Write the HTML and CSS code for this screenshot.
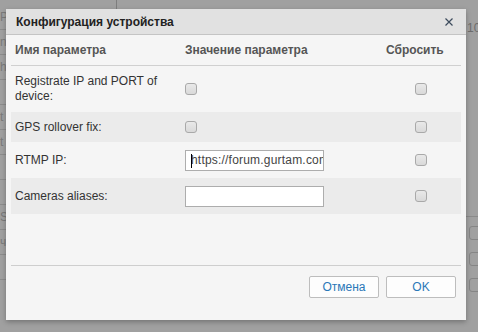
FILE: index.html
```html
<!DOCTYPE html>
<html>
<head>
<meta charset="utf-8">
<link rel="stylesheet" href="styles.css">
</head>
<body>
<div class="page">
  <div class="bg-left">
    <div class="bg-cell">P</div>
    <div class="bg-cell">n</div>
    <div class="bg-cell">h</div>
    <div class="bg-cell"></div>
    <div class="bg-cell">t</div>
    <div class="bg-cell">t</div>
    <div class="bg-cell"></div>
    <div class="bg-cell"></div>
    <div class="bg-cell">S</div>
    <div class="bg-cell">ч</div>
    <div class="bg-cell"></div>
  </div>
  <div class="bg-mid">
    <div class="bg-tick"></div>
  </div>
  <div class="bg-right">
    <div class="bg-num">10</div>
    <div class="bg-fill"></div>
    <div class="bg-btn"></div>
    <div class="bg-btn"></div>
    <div class="bg-btn"></div>
  </div>
</div>

<div class="dialog">
  <div class="dlg-head">
    <span class="dlg-title">Конфигурация устройства</span>
    <svg class="dlg-close" width="8" height="8" viewBox="0 0 8 8"><path d="M0.5 0.5L7.5 7.5M7.5 0.5L0.5 7.5" stroke="#3c4b5c" stroke-width="1.2" fill="none"/></svg>
  </div>
  <div class="dlg-body">
    <div class="row row-head">
      <div class="cell">Имя параметра</div>
      <div class="cell">Значение параметра</div>
      <div class="cell">Сбросить</div>
    </div>
    <div class="row row-tall">
      <div class="cell label">Registrate IP and PORT of<br>device:</div>
      <div class="cell"><span class="cb"></span></div>
      <div class="cell"><span class="cb cb-reset"></span></div>
    </div>
    <div class="row row-short alt">
      <div class="cell label">GPS rollover fix:</div>
      <div class="cell"><span class="cb"></span></div>
      <div class="cell"><span class="cb cb-reset"></span></div>
    </div>
    <div class="row row-input">
      <div class="cell label">RTMP IP:</div>
      <div class="cell"><div class="input"><span class="caret"></span>https://forum.gurtam.com</div></div>
      <div class="cell"><span class="cb cb-reset"></span></div>
    </div>
    <div class="row row-input alt">
      <div class="cell label">Cameras aliases:</div>
      <div class="cell"><div class="input"></div></div>
      <div class="cell"><span class="cb cb-reset"></span></div>
    </div>
  </div>
  <div class="dlg-foot">
    <button class="btn">Отмена</button>
    <button class="btn">OK</button>
  </div>
</div>
</body>
</html>
```

FILE: styles.css
```css
* { box-sizing: border-box; }
html, body {
  margin: 0;
  padding: 0;
  width: 478px;
  height: 332px;
  overflow: hidden;
  background: #a0a0a0;
  font-family: "Liberation Sans", Arial, sans-serif;
}
.page {
  display: flex;
  height: 332px;
}
.bg-left {
  width: 7px;
  display: flex;
  flex-direction: column;
  padding-top: 5px;
}
.bg-cell {
  height: 25px;
  border-bottom: 1px solid #8c8c8c;
  font-size: 12px;
  color: #7a7a7a;
  line-height: 24px;
  overflow: hidden;
}
.bg-mid {
  flex: 1;
  padding-left: 109px;
}
.bg-tick {
  width: 1px;
  height: 9px;
  background: #7e7e7e;
}
.bg-right {
  width: 12px;
  display: flex;
  flex-direction: column;
  padding-top: 20px;
}
.bg-num {
  font-size: 12px;
  color: #6c6c6c;
  line-height: 16px;
  padding-left: 1px;
  white-space: nowrap;
}
.bg-fill {
  height: 181px;
  border-bottom: 1px solid #8a8a8a;
}
.bg-btn {
  margin: 9px 0 3px 3px;
  height: 14px;
  width: 14px;
  border: 1px solid #858585;
  border-radius: 3px;
}

.dialog {
  position: absolute;
  left: 6px;
  top: 9px;
  width: 460px;
  height: 311px;
  background: #f5f5f5;
  box-shadow: 0 2px 5px rgba(0,0,0,0.28);
  display: flex;
  flex-direction: column;
}
.dlg-head {
  height: 26px;
  background: #e1e1e1;
  border-bottom: 1px solid #c4c4c4;
  display: flex;
  align-items: center;
  justify-content: space-between;
  padding: 0 13px 0 10px;
}
.dlg-title {
  font-weight: bold;
  font-size: 12px;
  color: #222;
}
.dlg-close { display: block; margin-top: 1px; }

.dlg-body {
  flex: 1;
  padding: 0 5px;
}
.row {
  display: grid;
  grid-template-columns: 170px 201px 1fr;
  align-items: center;
  padding-left: 4px;
  font-size: 12px;
  color: #333;
}
.row-head {
  height: 31px;
  border-bottom: 1px solid #d0d0d0;
  font-weight: bold;
  color: #555;
}
.row-tall { height: 46px; }
.row-short { height: 30px; }
.row-input { height: 36px; }
.alt { background: #ebebeb; }
.label { line-height: 15px; }

.cb {
  display: block;
  width: 12px;
  height: 12px;
  border: 1px solid #a9a9a9;
  border-radius: 3px;
  background: linear-gradient(#e9e9e9, #d9d9d9);
}
.cb-reset { margin-left: 29px; }

.input {
  width: 139px;
  height: 21px;
  border: 1px solid #adadad;
  background: #fff;
  font-size: 12px;
  letter-spacing: 0.2px;
  color: #444;
  line-height: 19px;
  padding-left: 5px;
  white-space: nowrap;
  overflow: hidden;
  position: relative;
}
.caret {
  position: absolute;
  left: 5px;
  top: 3px;
  width: 1px;
  height: 14px;
  background: #000;
}

.dlg-foot {
  height: 55px;
  margin: 0 5px;
  border-top: 1px solid #cecece;
  display: flex;
  justify-content: flex-end;
  align-items: flex-start;
  gap: 7px;
  padding-top: 10px;
  padding-right: 5px;
}
.btn {
  width: 70px;
  height: 22px;
  border: 1px solid #bdbdbd;
  border-radius: 2px;
  background: #fdfdfd;
  color: #2b78b8;
  font-family: "Liberation Sans", Arial, sans-serif;
  font-size: 12px;
  padding: 0;
}
```
